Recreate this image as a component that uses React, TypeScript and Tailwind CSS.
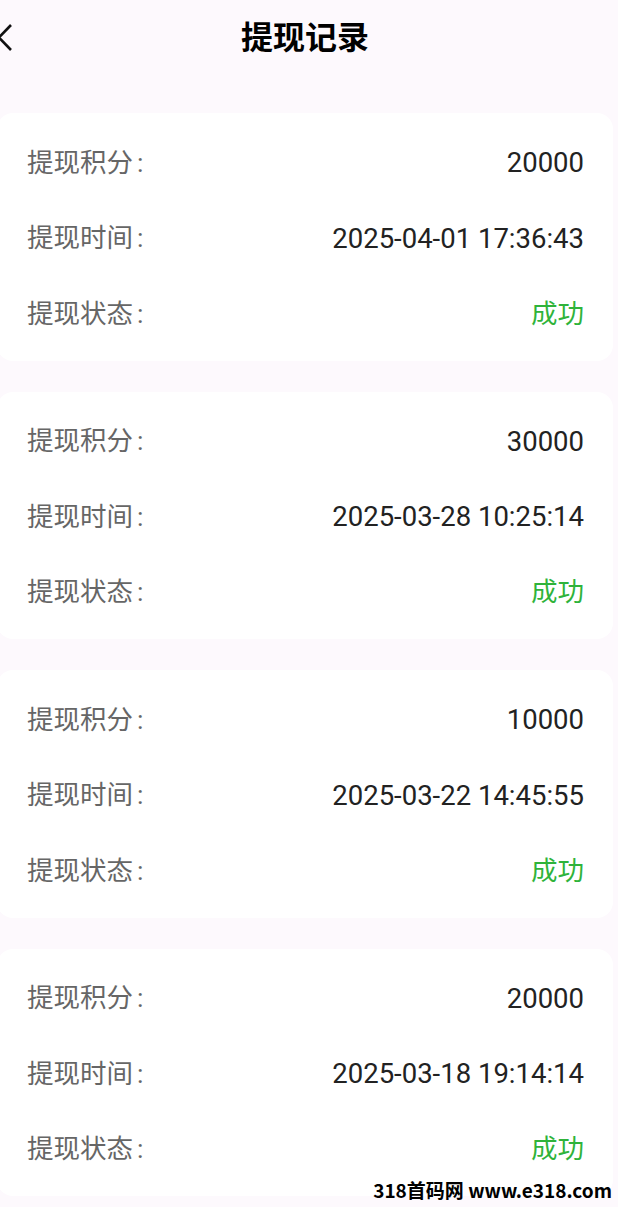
const records = [
  { points: "20000", time: "2025-04-01 17:36:43", status: "成功" },
  { points: "30000", time: "2025-03-28 10:25:14", status: "成功" },
  { points: "10000", time: "2025-03-22 14:45:55", status: "成功" },
  { points: "20000", time: "2025-03-18 19:14:14", status: "成功" },
];

const font = { fontFamily: "Roboto, 'Noto Sans CJK SC', sans-serif" };

function Row({ label, value, green }: { label: string; value: string; green?: boolean }) {
  return (
    <div className="flex h-[75.5px] items-center justify-between">
      <span className="text-[26.5px] text-[#666666]">
        {label}
        <span className="ml-[4px]">:</span>
      </span>
      <span className={`${green ? "text-[26.5px] text-[#2fb33a]" : "text-[27.5px] text-[#222222]"}`}>{value}</span>
    </div>
  );
}

export default function App() {
  return (
    <div className="relative h-[1207px] w-[618px] overflow-hidden bg-[#fdf9fd]" style={font}>
      <div className="-ml-[3px] w-[616px]">
        {/* Header */}
        <div className="relative flex h-[76px] items-center justify-center">
          <svg
            className="absolute left-0 top-[23px]"
            width="18"
            height="30"
            viewBox="0 0 18 30"
            fill="none"
            stroke="#111"
            strokeWidth="2.6"
          >
            <path d="M14 2 L2 14.5 L14 27" />
          </svg>
          <h1 className="text-[32px] font-bold text-black">提现记录</h1>
        </div>

        {/* Records */}
        <div className="pt-[37px]">
          {records.map((r, i) => (
            <div key={i} className="mb-[31px] rounded-[16px] bg-white pl-[30px] pr-[29px] pb-[9px] pt-[12px]">
              <Row label="提现积分" value={r.points} />
              <Row label="提现时间" value={r.time} />
              <Row label="提现状态" value={r.status} green />
            </div>
          ))}
        </div>
      </div>

      {/* watermark */}
      <div
        className="absolute bottom-[3px] right-[6px] text-[19px] font-bold text-black"
        style={{ fontFamily: "'Noto Sans CJK SC', sans-serif" }}
      >
        318首码网 www.e318.com
      </div>
    </div>
  );
}
